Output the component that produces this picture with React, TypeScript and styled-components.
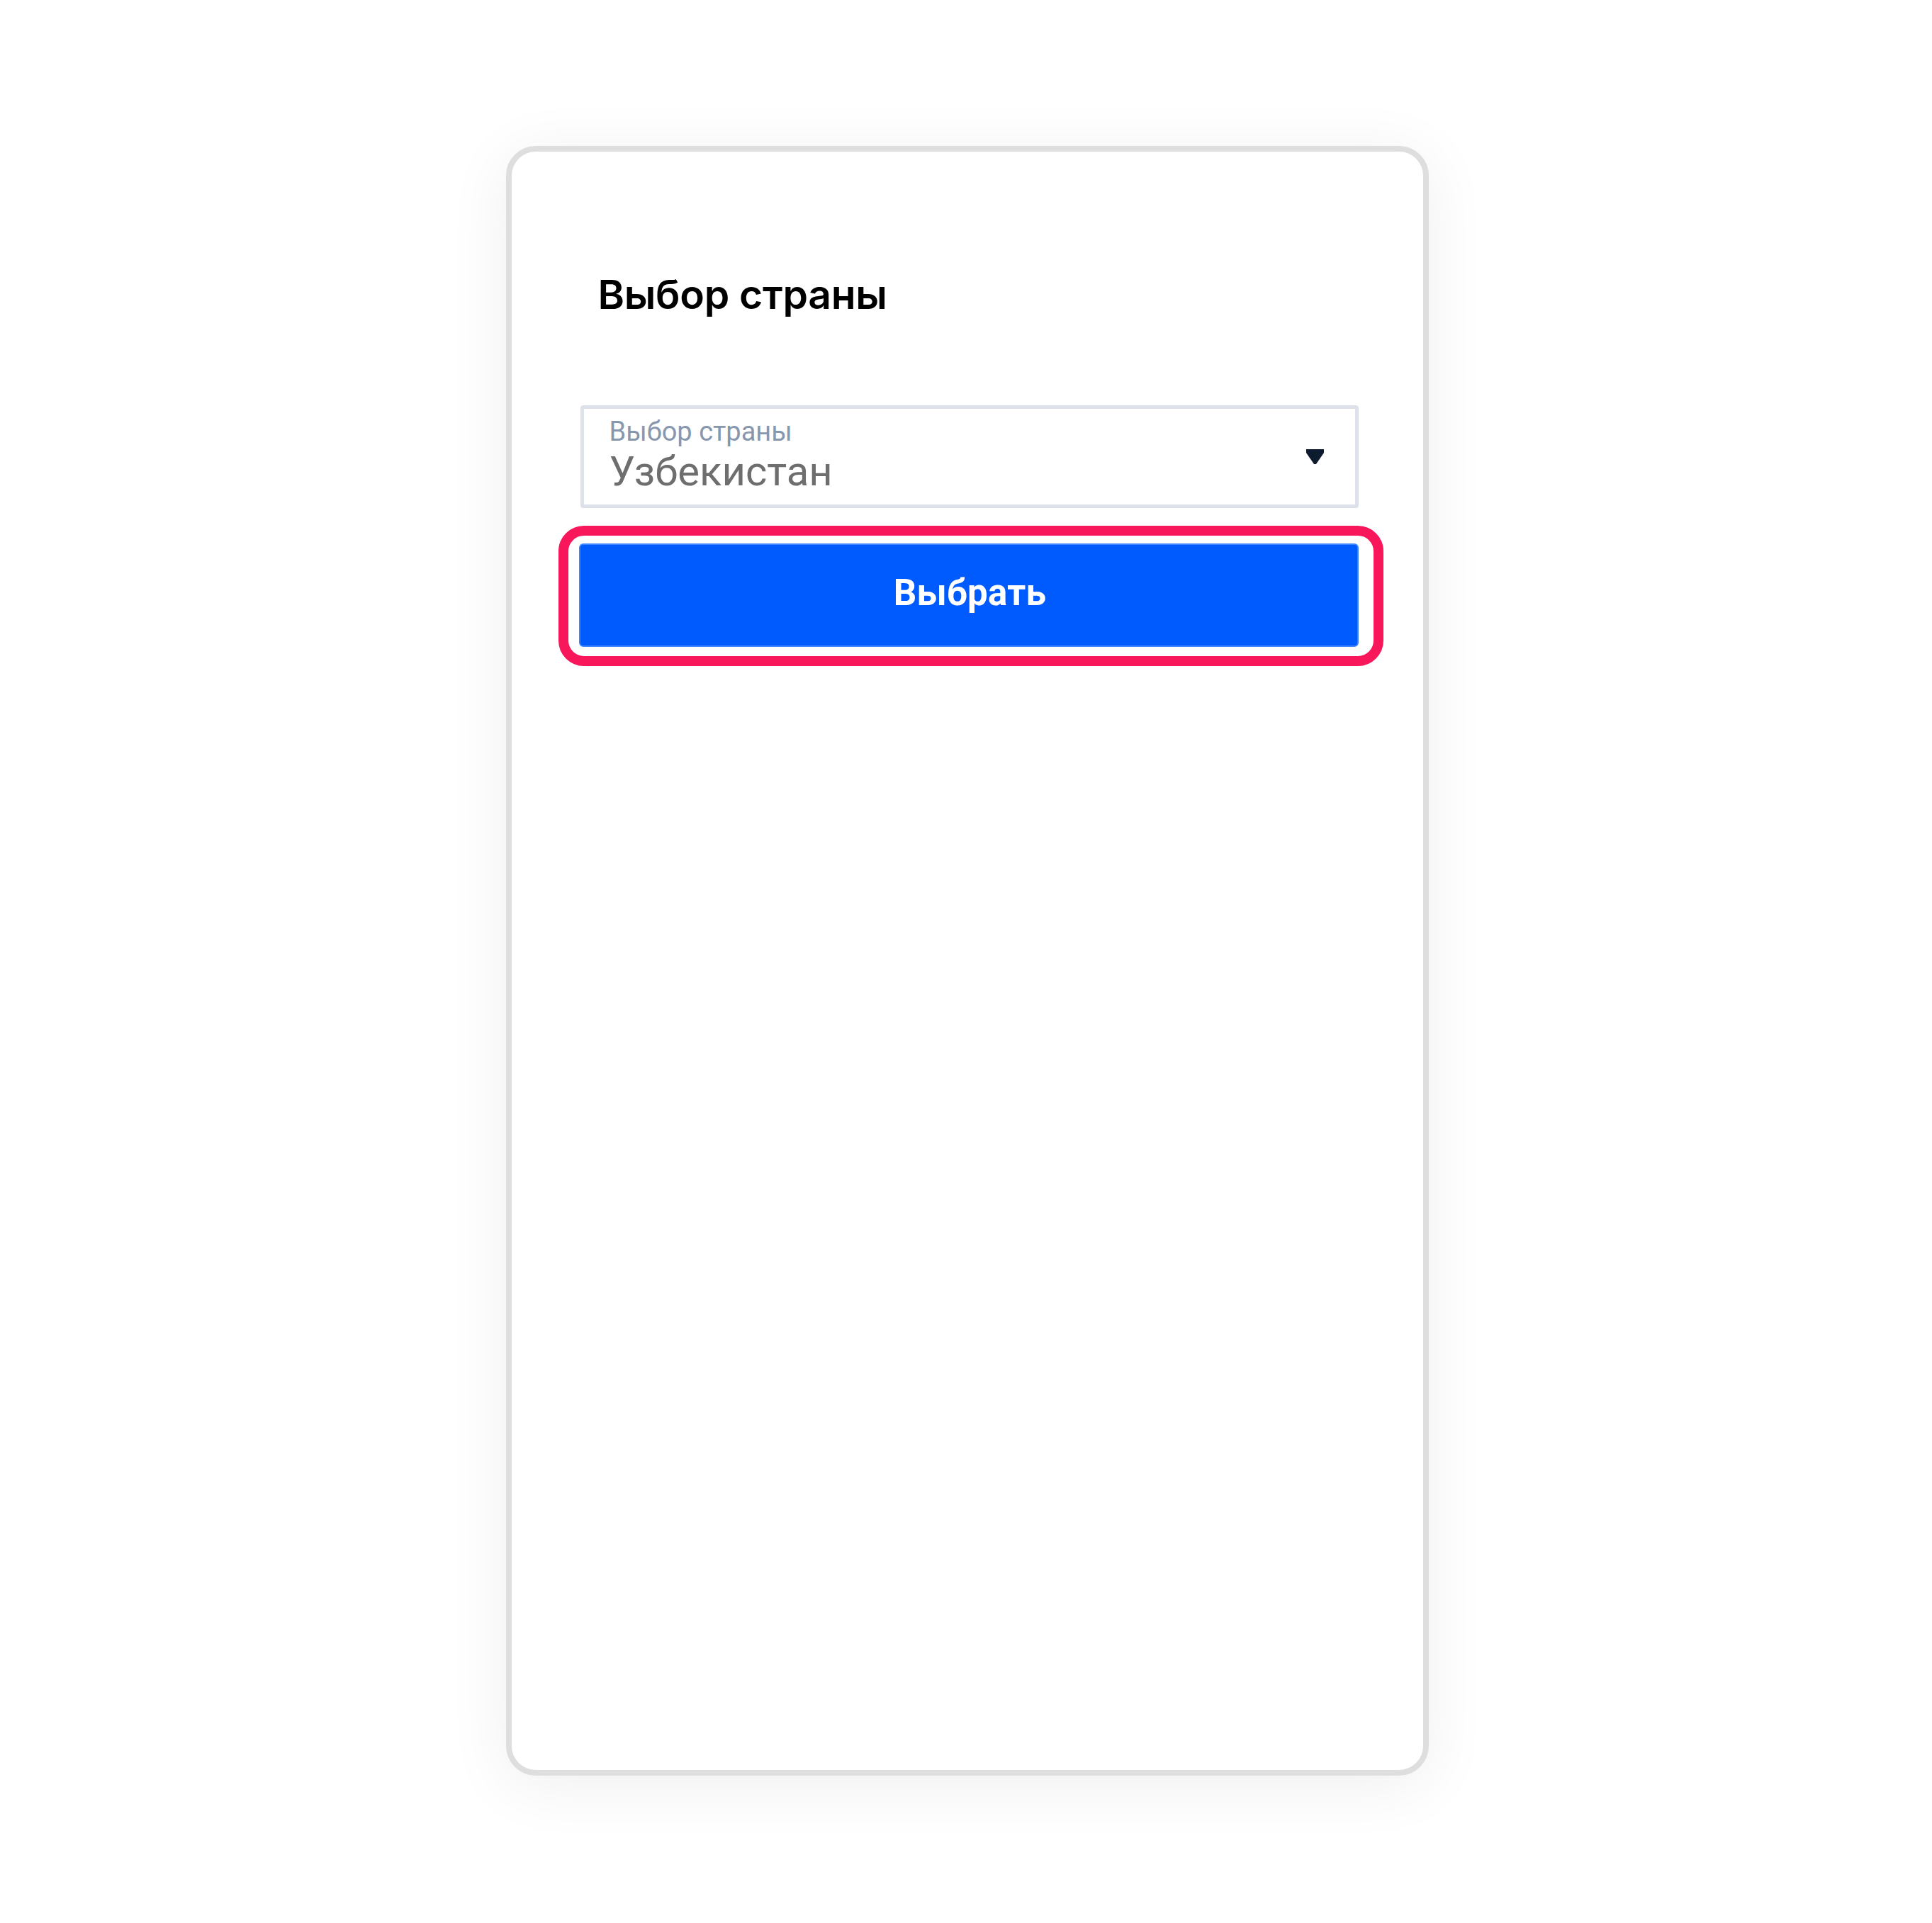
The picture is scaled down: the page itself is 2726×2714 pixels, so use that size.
import React from "react";
import styled, { createGlobalStyle } from "styled-components";

const GlobalStyle = createGlobalStyle`
  html, body {
    margin: 0;
    padding: 0;
    background: #ffffff;
    font-family: "Roboto", "Liberation Sans", Arial, sans-serif;
  }
`;

const Page = styled.div`
  display: flex;
  justify-content: center;
  padding-top: 206px;
  padding-bottom: 208px;
  padding-left: 3px;
`;

const Card = styled.div`
  box-sizing: border-box;
  width: 1302px;
  height: 2300px;
  background: #ffffff;
  border: 8px solid #dedede;
  border-radius: 42px;
  box-shadow: 0 14px 90px rgba(0, 0, 0, 0.065);
  padding: 167px 91px 0 97px;
  display: flex;
  flex-direction: column;
`;

const Title = styled.h1`
  margin: 0 0 0 25px;
  font-family: "Inter", "Roboto", sans-serif;
  font-weight: 600;
  font-size: 57px;
  line-height: 70px;
  color: #000000;
  letter-spacing: -0.3px;
`;

const SelectBox = styled.div`
  box-sizing: border-box;
  margin-top: 121px;
  height: 145px;
  border: 5px solid #dde2ea;
  border-radius: 4px;
  padding: 10px 44px 0 36px;
  display: flex;
  align-items: center;
  justify-content: space-between;
`;

const SelectTexts = styled.div`
  display: flex;
  flex-direction: column;
  align-self: flex-start;
`;

const SelectLabel = styled.span`
  font-family: "Roboto", sans-serif;
  font-size: 38px;
  line-height: 44px;
  color: #8797ad;
`;

const SelectValue = styled.span`
  font-family: "Roboto", sans-serif;
  font-size: 58px;
  line-height: 64px;
  color: #6e6e6e;
  margin-top: 2px;
`;

const Caret = styled.svg`
  width: 25px;
  height: 21px;
  flex-shrink: 0;
  margin-top: -10px;
`;

const ButtonWrap = styled.div`
  position: relative;
  margin-top: 50px;
  margin-left: -2px;
  &::after {
    content: "";
    position: absolute;
    top: -25px;
    bottom: -27px;
    left: -29px;
    right: -35px;
    border: 14px solid #f7175a;
    border-radius: 36px;
    pointer-events: none;
  }
`;

const PrimaryButton = styled.button`
  box-sizing: border-box;
  width: 100%;
  height: 146px;
  background: #005bff;
  border: 2px solid #3f85ff;
  border-radius: 6px;
  color: #ffffff;
  font-family: "Roboto", "Liberation Sans", sans-serif;
  font-weight: 700;
  font-size: 51px;
  line-height: 60px;
  letter-spacing: 0.3px;
  cursor: pointer;
  padding: 0 0 6px 4px;
`;

export default function App() {
  return (
    <>
      <GlobalStyle />
      <Page>
        <Card>
          <Title>Выбор страны</Title>
          <SelectBox>
            <SelectTexts>
              <SelectLabel>Выбор страны</SelectLabel>
              <SelectValue>Узбекистан</SelectValue>
            </SelectTexts>
            <Caret viewBox="0 0 25 21">
              <path d="M0 0 H25 V5 L14 21 H11 L0 5 Z" fill="#0d1b2e" />
            </Caret>
          </SelectBox>
          <ButtonWrap>
            <PrimaryButton>Выбрать</PrimaryButton>
          </ButtonWrap>
        </Card>
      </Page>
    </>
  );
}
